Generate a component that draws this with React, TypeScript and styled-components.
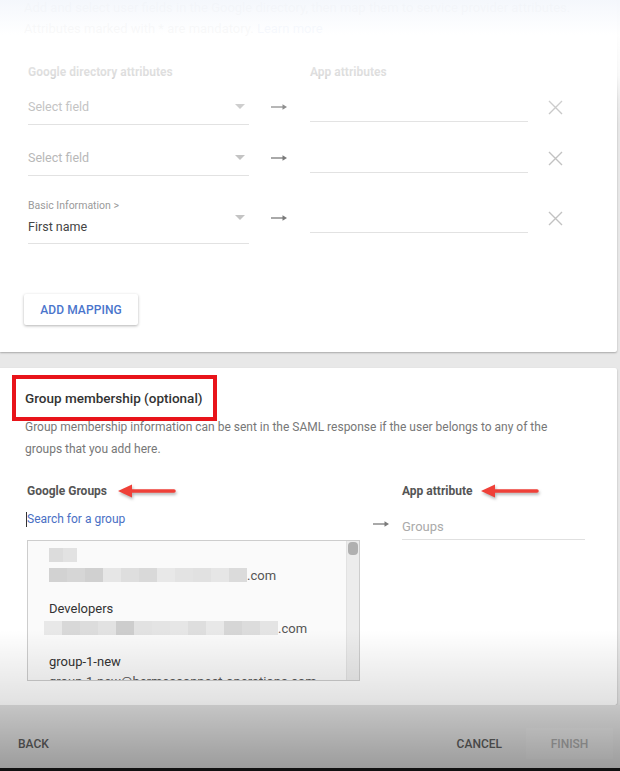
import React from 'react';
import styled, { createGlobalStyle } from 'styled-components';

const GlobalStyle = createGlobalStyle`
  html, body {
    margin: 0;
    padding: 0;
  }
  body {
    background: #e8e8e8;
    font-family: Roboto, "Liberation Sans", Arial, sans-serif;
  }
`;

const Page = styled.div`
  position: relative;
  width: 620px;
  height: 771px;
  overflow: hidden;
  display: flex;
  flex-direction: column;
  background: #e8e8e8;
`;

const Card = styled.section`
  background: #fff;
  margin-right: 3px;
  box-shadow: 0 1px 2px rgba(0, 0, 0, 0.28);
  border-radius: 0 2px 2px 0;
  box-sizing: border-box;
`;

const MappingCard = styled(Card)`
  height: 352px;
  padding: 0 0 0 24px;
`;

const GroupCard = styled(Card)`
  height: 337px;
  margin-top: 16px;
  padding: 7px 0 0 12px;
`;

const Intro = styled.p`
  margin: -3px 0 0;
  font-size: 13px;
  line-height: 21px;
  color: #777;
`;

const Link = styled.span`
  color: #4a75cc;
`;

const MapGrid = styled.div<{ $top: number; $height?: number }>`
  display: grid;
  grid-template-columns: 221px 61px 218px 55px;
  align-items: center;
  margin: ${(p) => p.$top}px 0 0 4px;
  height: ${(p) => (p.$height ? `${p.$height}px` : 'auto')};
`;

const ColumnHead = styled.div`
  font-size: 12px;
  font-weight: 700;
  line-height: 16px;
  color: #666;
`;

const Field = styled.div`
  align-self: stretch;
  display: flex;
  align-items: center;
  justify-content: space-between;
  border-bottom: 1px solid #e2e2e2;
  padding-right: 4px;
`;

const FieldText = styled.div`
  display: flex;
  flex-direction: column;
`;

const FieldLabel = styled.span`
  font-size: 10.5px;
  line-height: 14px;
  color: #9a9a9a;
  margin-bottom: 4px;
`;

const FieldValue = styled.span<{ $empty?: boolean }>`
  font-size: 12.5px;
  line-height: 20px;
  color: ${(p) => (p.$empty ? '#b8b8b8' : '#444')};
`;

const Caret = styled.span`
  width: 0;
  height: 0;
  border-left: 5px solid transparent;
  border-right: 5px solid transparent;
  border-top: 5px solid #c4c4c4;
`;

const AppInput = styled.div`
  height: 28px;
  border-bottom: 1px solid #e2e2e2;
`;

const IconCell = styled.div`
  display: flex;
  justify-content: center;
  align-items: center;
`;

const RaisedButton = styled.button`
  margin-top: 50px;
  width: 114px;
  height: 31px;
  border: none;
  border-radius: 2px;
  background: #fff;
  box-shadow: 0 1px 3px rgba(0, 0, 0, 0.3);
  font-family: inherit;
  font-size: 12px;
  font-weight: 500;
  color: #4a75cc;
  letter-spacing: 0.1px;
`;

const TitleBox = styled.div`
  display: inline-block;
  border: 4px solid #e8141a;
  padding: 9px 10px 9px 9px;
  font-size: 13.5px;
  font-weight: 500;
  line-height: 20px;
  color: #333;
`;

const Description = styled.p`
  margin: -5px 0 0 13px;
  width: 560px;
  font-size: 12px;
  line-height: 22px;
  color: #777;
`;

const GroupGrid = styled.div`
  display: grid;
  grid-template-columns: 333px 42px 183px;
  grid-template-rows: 24px 33px auto;
  margin: 23px 0 0 15px;
`;

const HeadCell = styled.div<{ $gap: number }>`
  align-self: start;
  display: flex;
  align-items: center;
  gap: ${(p) => p.$gap}px;
  height: 16px;
  font-size: 12px;
  font-weight: 700;
  line-height: 16px;
  color: #555;
`;

const SearchInput = styled.div`
  align-self: start;
  display: flex;
  align-items: center;
  height: 16px;
  margin-top: 4px;
  font-size: 12px;
  color: #4a6fc4;
`;

const Cursor = styled.span`
  width: 1px;
  height: 15px;
  background: #333;
  margin-left: -1px;
`;

const GroupsInput = styled.div`
  display: flex;
  align-items: flex-end;
  padding-bottom: 2px;
  border-bottom: 1px solid #e0e0e0;
  font-size: 13px;
  line-height: 20px;
  color: #aaa;
`;

const ListBox = styled.div`
  grid-column: 1;
  height: 141px;
  box-sizing: border-box;
  border: 1px solid #cdcdcd;
  background: #fafafa;
  display: flex;
  overflow: hidden;
`;

const ListItems = styled.div`
  flex: 1;
  padding: 4px 0 0 21px;
  overflow: hidden;
`;

const Item = styled.div`
  margin-bottom: 13px;
`;

const ItemLine = styled.div<{ $muted?: boolean; $shift?: number }>`
  display: flex;
  align-items: center;
  height: 20px;
  margin-left: ${(p) => p.$shift ?? 0}px;
  font-size: 13px;
  color: ${(p) => (p.$muted ? '#555' : '#333')};
  white-space: nowrap;
`;

const Pixel = styled.span<{ $w: number; $shade: string }>`
  display: inline-block;
  width: ${(p) => p.$w}px;
  height: 14px;
  background: ${(p) => p.$shade};
`;

const ScrollTrack = styled.div`
  width: 10px;
  background: #ececec;
  border-left: 1px solid #e2e2e2;
  padding: 1px 1px 0;
`;

const ScrollThumb = styled.div`
  height: 13px;
  border-radius: 4px;
  background: #b0b0b0;
`;

const Footer = styled.footer`
  height: 63px;
  box-sizing: border-box;
  display: flex;
  align-items: center;
  padding: 14px 7px 0 18px;
  background: #e2e2e2;
`;

const FlatButton = styled.button<{ $disabled?: boolean; $width?: number }>`
  border: none;
  padding: 0;
  height: 31px;
  width: ${(p) => (p.$width ? `${p.$width}px` : 'auto')};
  background: ${(p) => (p.$disabled ? 'rgba(255,255,255,0.13)' : 'transparent')};
  font-family: inherit;
  font-size: 12px;
  font-weight: 500;
  color: ${(p) => (p.$disabled ? '#ababab' : '#5e5e5e')};
`;

const Spacer = styled.div`
  flex: 1;
`;

const BottomEdge = styled.div`
  height: 3px;
  background: #111;
`;

const TopFade = styled.div`
  position: absolute;
  left: 0;
  right: 0;
  top: 0;
  height: 125px;
  pointer-events: none;
  background: linear-gradient(
    rgba(244, 247, 252, 0.98) 0px,
    rgba(255, 255, 255, 0.95) 35px,
    rgba(255, 255, 255, 0.78) 75px,
    rgba(255, 255, 255, 0.22) 100px,
    rgba(255, 255, 255, 0) 125px
  );
`;

const BottomShade = styled.div`
  position: absolute;
  left: 0;
  right: 0;
  top: 630px;
  bottom: 3px;
  pointer-events: none;
  background: linear-gradient(
    rgba(0, 0, 0, 0) 0%,
    rgba(0, 0, 0, 0.11) 50%,
    rgba(0, 0, 0, 0.31) 100%
  );
`;

const ThinArrow = () => (
  <svg width="17" height="8" viewBox="0 0 17 8">
    <path d="M0 4H14" stroke="#7a7a7a" strokeWidth="1.3" />
    <path d="M11.5 1.2L16 4L11.5 6.8Z" fill="#7a7a7a" />
  </svg>
);

const CloseIcon = () => (
  <svg width="15" height="15" viewBox="0 0 15 15">
    <path d="M1 1L14 14M14 1L1 14" stroke="#c2c2c2" strokeWidth="1.4" />
  </svg>
);

const RedArrow = () => (
  <svg width="60" height="16" viewBox="0 0 60 16" style={{ filter: 'drop-shadow(1px 2px 1.5px rgba(0,0,0,0.3))' }}>
    <path d="M12 8H57" stroke="#ef4038" strokeWidth="3.5" strokeLinecap="round" />
    <path d="M1 8L15 1.5V14.5Z" fill="#ef4038" />
  </svg>
);

type Mapping = { label?: string; value?: string; top: number; height: number };

const mappings: Mapping[] = [
  { top: 9, height: 36 },
  { top: 15, height: 36 },
  { label: 'Basic Information >', value: 'First name', top: 16, height: 52 },
];

const Redacted = ({ blocks }: { blocks: string[] }) => (
  <>
    {blocks.map((shade, i) => (
      <Pixel key={i} $w={18} $shade={shade} />
    ))}
  </>
);

export default function App() {
  return (
    <>
      <GlobalStyle />
      <Page>
        <MappingCard>
          <Intro>
            Add and select user fields in the Google directory, then map them to service provider attributes.
            <br />
            Attributes marked with * are mandatory. <Link>Learn more</Link>
          </Intro>
          <MapGrid $top={25}>
            <ColumnHead>Google directory attributes</ColumnHead>
            <div />
            <ColumnHead>App attributes</ColumnHead>
          </MapGrid>
          {mappings.map((m, i) => (
            <MapGrid key={i} $top={m.top} $height={m.height}>
              <Field>
                <FieldText>
                  {m.label && <FieldLabel>{m.label}</FieldLabel>}
                  <FieldValue $empty={!m.value}>{m.value ?? 'Select field'}</FieldValue>
                </FieldText>
                <Caret />
              </Field>
              <IconCell>
                <ThinArrow />
              </IconCell>
              <AppInput />
              <IconCell>
                <CloseIcon />
              </IconCell>
            </MapGrid>
          ))}
          <RaisedButton>ADD MAPPING</RaisedButton>
        </MappingCard>

        <GroupCard>
          <TitleBox>Group membership (optional)</TitleBox>
          <Description>
            Group membership information can be sent in the SAML response if the user belongs to any of the
            groups that you add here.
          </Description>
          <GroupGrid>
            <HeadCell $gap={10}>
              Google Groups
              <RedArrow />
            </HeadCell>
            <div />
            <HeadCell $gap={8}>
              App attribute
              <RedArrow />
            </HeadCell>

            <SearchInput>
              <Cursor />
              Search for a group
            </SearchInput>
            <IconCell>
              <ThinArrow />
            </IconCell>
            <GroupsInput>Groups</GroupsInput>

            <ListBox>
              <ListItems>
                <Item>
                  <ItemLine>
                    <Pixel $w={14} $shade="#dcdcdc" />
                    <Pixel $w={14} $shade="#e2e2e2" />
                  </ItemLine>
                  <ItemLine $muted>
                    <Redacted
                      blocks={['#d2d2d2', '#d6d6d6', '#d0d0d0', '#e6e6e6', '#dedede', '#d9d9d9', '#e8e8e8', '#e3e3e3', '#e1e1e1', '#e6e6e6', '#dbdbdb']}
                    />
                    .com
                  </ItemLine>
                </Item>
                <Item>
                  <ItemLine>Developers</ItemLine>
                  <ItemLine $muted $shift={-5}>
                    <Redacted
                      blocks={['#e8e8e8', '#d8d8d8', '#dcdcdc', '#e2e2e2', '#cdcdcd', '#e2e2e2', '#e4e4e4', '#e6e6e6', '#dedede', '#e8e8e8', '#d6d6d6', '#dcdcdc', '#e4e4e4']}
                    />
                    .com
                  </ItemLine>
                </Item>
                <Item>
                  <ItemLine>group-1-new</ItemLine>
                  <ItemLine $muted>group-1-new@hermesconnect-operations.com</ItemLine>
                </Item>
              </ListItems>
              <ScrollTrack>
                <ScrollThumb />
              </ScrollTrack>
            </ListBox>
          </GroupGrid>
        </GroupCard>

        <Footer>
          <FlatButton>BACK</FlatButton>
          <Spacer />
          <FlatButton style={{ marginRight: 24 }}>CANCEL</FlatButton>
          <FlatButton $disabled $width={87}>
            FINISH
          </FlatButton>
        </Footer>
        <BottomEdge />

        <TopFade />
        <BottomShade />
      </Page>
    </>
  );
}
